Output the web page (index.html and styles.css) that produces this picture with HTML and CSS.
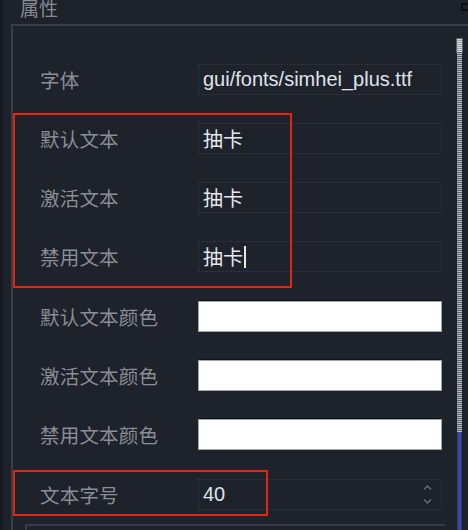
FILE: index.html
```html
<!DOCTYPE html>
<html lang="zh">
<head>
<meta charset="utf-8">
<title>属性</title>
<link rel="stylesheet" href="styles.css">
</head>
<body>
<div class="window">
  <div class="title">属性</div>
  <div class="group">
    <div class="rows">
      <div class="row">
        <div class="label">字体</div>
        <div class="field text latin">gui/fonts/simhei_plus.ttf</div>
      </div>
      <div class="row">
        <div class="label">默认文本</div>
        <div class="field text">抽卡</div>
      </div>
      <div class="row">
        <div class="label">激活文本</div>
        <div class="field text">抽卡</div>
      </div>
      <div class="row">
        <div class="label">禁用文本</div>
        <div class="field text">抽卡<span class="caret"></span></div>
      </div>
      <div class="row">
        <div class="label">默认文本颜色</div>
        <div class="field color"></div>
      </div>
      <div class="row">
        <div class="label">激活文本颜色</div>
        <div class="field color"></div>
      </div>
      <div class="row">
        <div class="label">禁用文本颜色</div>
        <div class="field color"></div>
      </div>
      <div class="row">
        <div class="label">文本字号</div>
        <div class="field text latin spin">
          <span>40</span>
          <span class="arrows">
            <svg width="9" height="5" viewBox="0 0 9 5"><path d="M1 4.5 L4.5 1 L8 4.5" fill="none" stroke="#6b707a" stroke-width="1.3"/></svg>
            <svg width="9" height="5" viewBox="0 0 9 5"><path d="M1 0.5 L4.5 4 L8 0.5" fill="none" stroke="#6b707a" stroke-width="1.3"/></svg>
          </span>
        </div>
      </div>
      <div class="next-box"></div>
    </div>
    <div class="scroll">
      <div class="grip"></div>
      <div class="track"></div>
      <div class="fill"></div>
    </div>
  </div>
  <div class="mark mark-1"></div>
  <div class="mark mark-2"></div>
  <div class="corner"></div>
</div>
</body>
</html>
```

FILE: styles.css
```css
* { box-sizing: border-box; }

html, body {
  margin: 0;
  padding: 0;
  background: #1e222b;
}

.window {
  position: relative;
  width: 468px;
  height: 530px;
  overflow: hidden;
  display: flex;
  flex-direction: column;
  background: #1e222b;
  border-left: 3px solid #16191f;
  font-family: "Noto Sans CJK SC", "Noto Sans", sans-serif;
}

.title {
  margin-top: -2px;
  height: 20px;
  line-height: 20px;
  padding-left: 17px;
  font-size: 19px;
  color: #858a93;
  flex: none;
}

.group {
  flex: 1;
  margin-top: 6px;
  margin-left: 8px;
  border-top: 2px solid #393e48;
  border-left: 2px solid #393e48;
  display: flex;
  min-height: 0;
}

.rows {
  flex: 1;
  padding-top: 23.4px;
  padding-left: 27px;
  display: flex;
  flex-direction: column;
}

.row {
  height: 59.3px;
  flex: none;
  display: flex;
  align-items: center;
}

.label {
  width: 158px;
  font-size: 19.5px;
  color: #8a8e97;
  letter-spacing: 0.2px;
  white-space: nowrap;
}

.field {
  width: 244px;
  height: 31px;
  flex: none;
}

.text {
  border: 1px dotted #343a45;
  display: flex;
  align-items: center;
  padding-left: 4px;
  color: #e4e8ee;
  font-size: 20px;
  font-family: "Noto Sans CJK SC", sans-serif;
}

.latin {
  font-family: "Liberation Sans", Arial, sans-serif;
  font-size: 20px;
  color: #dfe4eb;
}

.caret {
  display: inline-block;
  width: 2px;
  height: 22px;
  margin-left: 1px;
  background: #e8e8e8;
}

.color {
  background: #ffffff;
  border: 1px solid #a0a4ab;
  box-shadow: 0 -1px 0 #0f1116;
}

.spin {
  justify-content: space-between;
}

.arrows {
  display: flex;
  flex-direction: column;
  gap: 9px;
  margin-right: 9px;
}

.arrows svg { display: block; }

.next-box {
  margin-left: -15px;
  margin-top: 0;
  width: 420px;
  height: 12px;
  border-top: 2px solid #363b45;
  border-left: 2px solid #363b45;
}

.scroll {
  flex: none;
  width: 7px;
  margin-top: 12px;
  margin-right: 5px;
  display: flex;
  flex-direction: column;
  align-items: center;
}

.grip {
  width: 7px;
  height: 15px;
  background: repeating-linear-gradient(to bottom, #d6d8dc 0 1px, #9a9ea5 1px 2px);
  border: 1px solid #5d6168;
  flex: none;
}

.track {
  width: 5px;
  height: 379px;
  flex: none;
  background: repeating-linear-gradient(to bottom, #b9bcc2 0 1px, #5e626a 1px 2px);
}

.fill {
  width: 5px;
  flex: 1;
  background: #3b4aa4;
  box-shadow: inset 1px 0 0 #2b3677, inset -1px 0 0 #2b3677;
}

.mark {
  position: absolute;
  border: 2px solid #e3260f;
  pointer-events: none;
}

.mark-1 {
  left: 10px;
  top: 113px;
  width: 279px;
  height: 175px;
}

.mark-2 {
  left: 10px;
  top: 470px;
  width: 255px;
  height: 46px;
}

.corner {
  position: absolute;
  right: 0;
  top: 3px;
  width: 7px;
  height: 8px;
  border: 2px solid #0c0d10;
  border-right: none;
}
```
